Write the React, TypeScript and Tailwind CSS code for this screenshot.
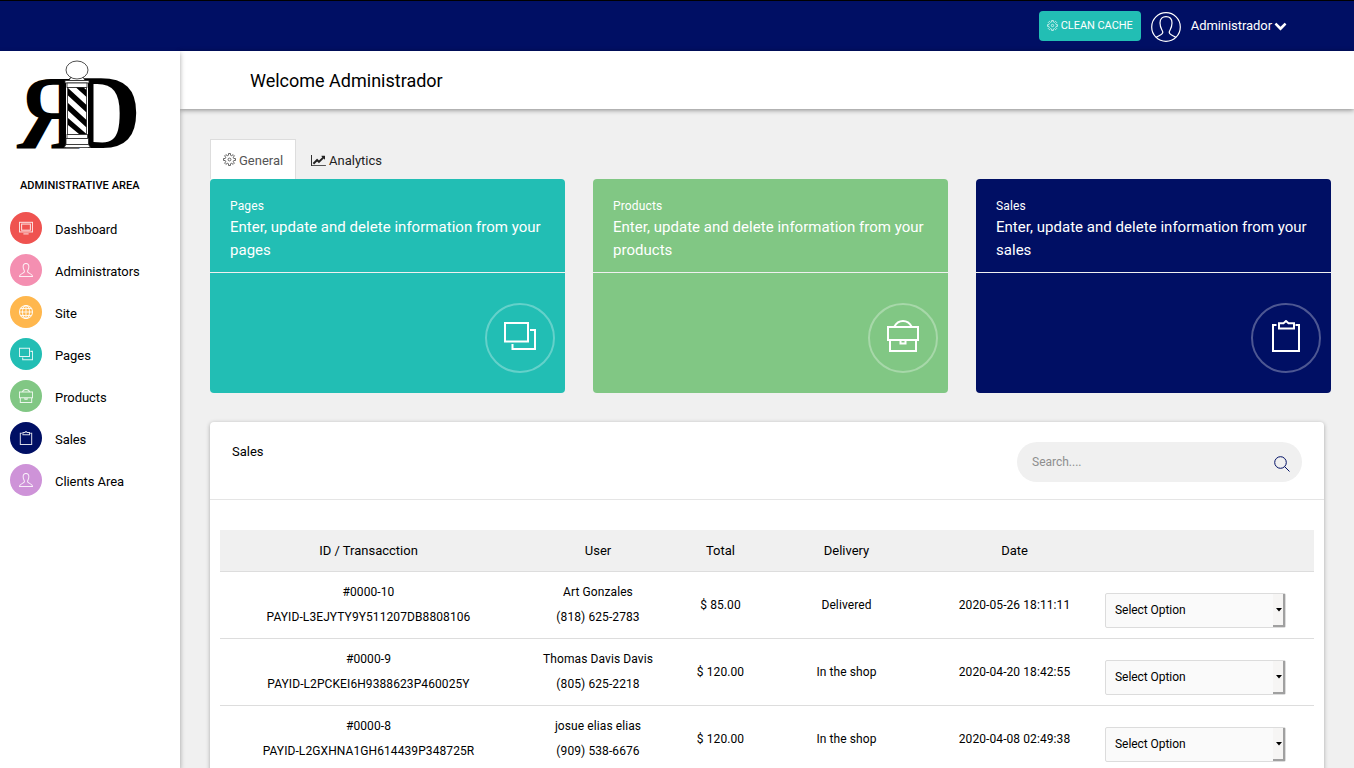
import type { ReactNode } from "react";

type IconProps = { className?: string; sw?: number };

function Svg({ className, children, sw = 2 }: IconProps & { children: ReactNode }) {
  return (
    <svg viewBox="0 0 32 32" className={className} fill="none" stroke="currentColor" strokeWidth={sw}>
      {children}
    </svg>
  );
}

function MonitorIcon(p: IconProps) {
  return (
    <Svg {...p}>
      <rect x="1" y="3" width="30" height="22" />
      <rect x="6" y="7" width="20" height="14" />
      <path d="M10 29.500h12" />
    </Svg>
  );
}

function UserIcon(p: IconProps) {
  return (
    <Svg {...p}>
      <path d="M12.500 19.500C12.500 17 9.500 14 9.500 8.500C9.500 3.500 12 1 16 1S22.500 3.500 22.500 8.500C22.500 14 19.500 17 19.500 19.500C19.500 24 31 23.500 31 31H1C1 23.500 12.500 24 12.500 19.500Z" />
    </Svg>
  );
}

function GlobeIcon(p: IconProps) {
  return (
    <Svg {...p}>
      <circle cx="16" cy="16" r="15" />
      <ellipse cx="16" cy="16" rx="8" ry="15" />
      <path d="M16 1v30M1 16h30M4 8h24M4 24h24" />
    </Svg>
  );
}

function PagesIcon(p: IconProps) {
  return (
    <Svg {...p}>
      <path d="M1 3h23v18.500H1zM26 10h5v19H8.500v-5" />
    </Svg>
  );
}

function BriefcaseIcon(p: IconProps) {
  return (
    <Svg {...p}>
      <path d="M1 7h30v13H1zM3 20v11h26V20M7.500 6.500C9.500 2.500 12.500 1 16 1s6.500 1.500 8.500 5.500M13.500 20.500v3h5v-3" />
    </Svg>
  );
}

function ClipboardIcon(p: IconProps) {
  return (
    <Svg {...p}>
      <path d="M6.500 5H3v26h26V5h-3.500M9 3.200h4.500L16 1l2.500 2.200H24v5.300H9z" />
    </Svg>
  );
}

const gearPath =
  Array.from({ length: 8 }, (_, i) => {
    const at = (deg: number, r: number) => {
      const a = ((i * 45 + deg) * Math.PI) / 180;
      return `${(16 + r * Math.sin(a)).toFixed(2)} ${(16 - r * Math.cos(a)).toFixed(2)}`;
    };
    return `${i ? "L" : "M"}${at(-13, 10.8)}L${at(-9, 15)}L${at(9, 15)}L${at(13, 10.8)}`;
  }).join("") + "Z";

function GearIcon(p: IconProps) {
  return (
    <Svg {...p}>
      <circle cx="16" cy="16" r="3.500" />
      <path d={gearPath} />
    </Svg>
  );
}

function ProfileIcon({ className }: IconProps) {
  return (
    <svg viewBox="0 0 30 30" className={className} fill="none" stroke="currentColor" strokeWidth="1.2">
      <circle cx="15" cy="15" r="14.300" />
      <path d="M5 25.500C7 23.500 11.800 23.300 11.800 20.300C11.800 18.300 9 16.500 9 11C9 6.500 11.500 4.700 15 4.700S21 6.500 21 11C21 16.500 18.200 18.300 18.200 20.300C18.200 23.300 23 23.500 25 25.500" />
    </svg>
  );
}

function Logo() {
  return (
    <svg viewBox="0 0 136 100" className="h-[100px] w-[136px] overflow-visible">
      <g fill="#000" fontFamily="Liberation Serif, serif" fontWeight="bold" fontSize="102">
        <text transform="translate(71.500 92.800) scale(-0.870 1.030)">R</text>
        <text transform="translate(57.500 92.800) scale(1 1.030)">D</text>
      </g>
      <rect x="56" y="26" width="22" height="67" fill="#fff" />
      <g fill="#fff" stroke="#222" strokeWidth="0.800">
        <path d="M61 22h12l2 3.500H59z" />
        <ellipse cx="67" cy="15" rx="11" ry="9" />
        <rect x="55" y="25.500" width="24" height="2.500" />
        <rect x="57" y="28" width="20" height="4.500" />
        <rect x="57.500" y="32.500" width="19" height="47" />
        <rect x="57" y="79.500" width="20.500" height="4" />
        <rect x="56" y="83.500" width="22.500" height="6" />
        <path d="M56 89.500h22.500l2 3H54z" />
      </g>
      <path
        fill="#000"
        d="M66 32.500h7.500l3 2.500v7zM58 33l18.500 17v7.500L58 40.500zM58 48l18.500 17v7.500L58 55.500zM58 63l18.500 16h-7.500L58 70z"
      />
    </svg>
  );
}

const menu = [
  { label: "Dashboard", color: "bg-[#ef5350]", Icon: MonitorIcon },
  { label: "Administrators", color: "bg-[#f48fb1]", Icon: UserIcon },
  { label: "Site", color: "bg-[#ffb74d]", Icon: GlobeIcon },
  { label: "Pages", color: "bg-[#22beb4]", Icon: PagesIcon },
  { label: "Products", color: "bg-[#81c784]", Icon: BriefcaseIcon },
  { label: "Sales", color: "bg-[#000f64]", Icon: ClipboardIcon },
  { label: "Clients Area", color: "bg-[#ce93d8]", Icon: UserIcon },
];

const cards = [
  { title: "Pages", noun: "pages", color: "bg-[#22beb4]", Icon: PagesIcon },
  { title: "Products", noun: "products", color: "bg-[#81c784]", Icon: BriefcaseIcon },
  { title: "Sales", noun: "sales", color: "bg-[#000f64]", Icon: ClipboardIcon },
];

const rows = [
  { id: "#0000-10", pay: "PAYID-L3EJYTY9Y511207DB8808106", user: "Art Gonzales", phone: "(818) 625-2783", total: "$ 85.00", delivery: "Delivered", date: "2020-05-26 18:11:11" },
  { id: "#0000-9", pay: "PAYID-L2PCKEI6H9388623P460025Y", user: "Thomas Davis Davis", phone: "(805) 625-2218", total: "$ 120.00", delivery: "In the shop", date: "2020-04-20 18:42:55" },
  { id: "#0000-8", pay: "PAYID-L2GXHNA1GH614439P348725R", user: "josue elias elias", phone: "(909) 538-6676", total: "$ 120.00", delivery: "In the shop", date: "2020-04-08 02:49:38" },
];

const columns = "grid grid-cols-[297px_162px_83px_169px_167px_216px] text-center";

function SelectBox() {
  return (
    <div className="mt-[21px] ml-[7px] flex h-[35px] w-[181px] items-stretch rounded-[2px] border border-[#dcdcdc] bg-[#fafafa] text-left tracking-[-0.050px]">
      <span className="flex-1 pl-[9px] leading-[32px]">Select Option</span>
      <span className="flex w-3 items-center justify-center border-r-2 border-b-2 border-[#a0a0a0] bg-[#f6f5f4] pl-px">
        <svg viewBox="0 0 6 4" className="h-1 w-1.5 shrink-0">
          <path d="M0 0h6L3 3.500z" />
        </svg>
      </span>
    </div>
  );
}

export default function App() {
  return (
    <div className="flex h-[768px] w-[1354px] flex-col overflow-hidden bg-[#f0f0f0] font-['Roboto',sans-serif] text-[13px] text-black">
      <header className="flex h-[51px] shrink-0 items-start justify-end border-t border-black bg-[#000f64] pr-[67px] text-white">
        <button className="mt-2.5 flex h-[30px] w-[102px] items-center gap-[3px] rounded-[4px] bg-[#22beb4] pt-px pl-2 text-[11px] tracking-[-0.050px] whitespace-nowrap">
          <GearIcon className="mb-0.5 size-[11px] shrink-0" sw={2} />
          CLEAN CACHE
        </button>
        <ProfileIcon className="mt-[11px] ml-2.5 size-[30px]" />
        <span className="mt-[15px] ml-2.5 leading-5 tracking-[-0.060px]">Administrador</span>
        <svg viewBox="0 0 1792 1792" className="mt-[18px] ml-[2px] size-[13px]" fill="currentColor">
          <path d="M1683 808l-742 741q-19 19-45 19t-45-19l-742-741q-19-19-19-45.500t19-45.500l166-165q19-19 45-19t45 19l531 531 531-531q19-19 45-19t45 19l166 165q19 19 19 45.500t-19 45.500z" />
        </svg>
      </header>

      <div className="flex min-h-0 flex-1">
        <aside className="z-10 w-[180px] shrink-0 bg-white shadow-[0_2px_5px_rgba(0,0,0,0.350)]">
          <div className="pt-1 pl-2.5">
            <Logo />
          </div>
          <h2 className="mt-[21px] pl-5 text-[11px] leading-5 font-medium tracking-[0.050px]">ADMINISTRATIVE AREA</h2>
          <nav className="mt-4 flex flex-col gap-2.5 pl-2.5">
            {menu.map(({ label, color, Icon }) => (
              <a key={label} className="flex h-8 items-center">
                <span className={`flex size-8 items-center justify-center rounded-full text-white/85 ${color}`}>
                  <Icon className="size-[14px]" sw={2.3} />
                </span>
                <span className="mt-[3px] ml-[13px] tracking-[-0.060px]">{label}</span>
              </a>
            ))}
          </nav>
        </aside>

        <main className="flex min-w-0 flex-1 flex-col">
          <div className="h-[58px] shrink-0 bg-white pl-[70px] text-lg leading-[59px] shadow-[0_1px_5px_rgba(0,0,0,0.450)]">
            Welcome Administrador
          </div>

          <div className="mt-[30px] flex h-10 shrink-0 pl-[30px]">
            <div className="flex w-[86px] items-center gap-[3px] border border-b-0 border-[#ddd] bg-white pl-3 text-[#555]">
              <GearIcon className="size-[13px]" sw={2.2} />
              <span className="mt-[2px]">General</span>
            </div>
            <div className="flex items-center gap-[3px] pl-[15px] text-[#222]">
              <svg viewBox="0 0 2048 1792" className="mt-0.5 h-[13px] w-[15px]" fill="currentColor">
                <path d="M2048 1536v128h-2048v-1536h128v1408h1920zm-128-1248v435q0 21-19.500 29.500t-35.500-7.500l-121-121-633 633q-10 10-23 10t-23-10l-233-233-416 416-192-192 585-585q10-10 23-10t23 10l233 233 464-464-121-121q-16-16-7.500-35.500t29.500-19.500h435q14 0 23 9t9 23z" />
              </svg>
              <span className="mt-[3px]">Analytics</span>
            </div>
          </div>

          <div className="flex shrink-0 gap-7 pl-[30px]">
            {cards.map(({ title, noun, color, Icon }) => (
              <section key={title} className={`h-[214px] w-[355px] shrink-0 rounded-[4px] text-white ${color}`}>
                <div className="h-[94px] border-b border-[#f0f0f0] px-5 pt-[17px]">
                  <h3 className="text-xs leading-5 tracking-[0.150px]">{title}</h3>
                  <p className="text-[15px] leading-[23px] whitespace-nowrap tracking-[0.030px]">
                    Enter, update and delete information from your
                    <br />
                    {noun}
                  </p>
                </div>
                <div className="flex justify-end pt-[30px] pr-2.5">
                  <div className="flex size-[70px] justify-center rounded-full border-2 border-white/30 pt-[15px]">
                    <Icon className="size-8 shrink-0" />
                  </div>
                </div>
              </section>
            ))}
          </div>

          <section className="mt-[29px] ml-[30px] h-[400px] w-[1114px] shrink-0 rounded-[4px] bg-white shadow-[0_1px_4px_rgba(0,0,0,0.300)]">
            <div className="flex h-[78px] items-start justify-between border-b border-[#e5e5e5] pt-5 pr-[22px] pl-[22px]">
              <h3 className="leading-5">Sales</h3>
              <div className="flex h-10 w-[285px] items-center justify-between rounded-full bg-[#f0f0f0] pr-3 pl-[15px] text-xs text-[#8e8e8e]">
                <span>Search....</span>
                <svg viewBox="0 0 16 16" className="mt-1 size-4 text-[#000f64]" fill="none" stroke="currentColor" strokeWidth="1">
                  <circle cx="6.500" cy="6.500" r="5.800" />
                  <path d="M10.700 10.700l4.800 4.800" />
                </svg>
              </div>
            </div>
            <div className="mx-2.5 mt-[30px]">
              <div className={`${columns} h-[42px] border-b border-[#ddd] bg-[#f0f0f0] leading-[42px]`}>
                <span>ID / Transacction</span>
                <span>User</span>
                <span>Total</span>
                <span>Delivery</span>
                <span>Date</span>
              </div>
              {rows.map((r) => (
                <div key={r.id} className={`${columns} h-[67px] border-b border-[#ddd] text-xs leading-[25px] tracking-[0.090px]`}>
                  <div className="pt-2">
                    {r.id}
                    <br />
                    {r.pay}
                  </div>
                  <div className="pt-2">
                    {r.user}
                    <br />
                    {r.phone}
                  </div>
                  <span className="pt-[21px]">{r.total}</span>
                  <span className="pt-[21px]">{r.delivery}</span>
                  <span className="pt-[21px]">{r.date}</span>
                  <SelectBox />
                </div>
              ))}
            </div>
          </section>
        </main>
      </div>
    </div>
  );
}
